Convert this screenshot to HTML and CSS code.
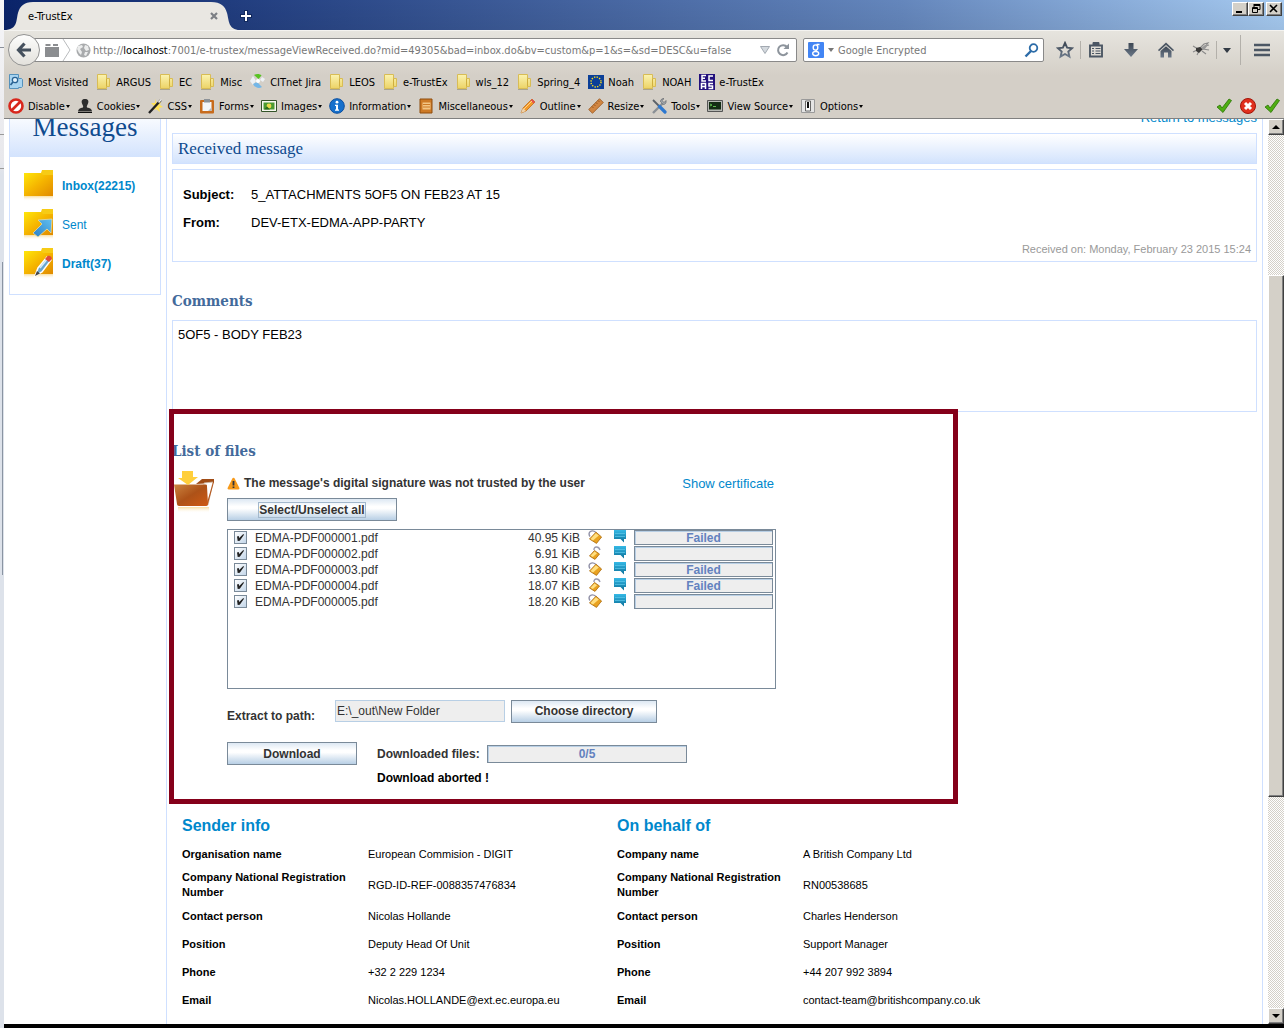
FILE: index.html
```html
<!DOCTYPE html>
<html lang="en">
<head>
<meta charset="utf-8">
<title>e-TrustEx</title>
<link rel="stylesheet" href="styles.css">
</head>
<body>
<svg class="defs" aria-hidden="true">
  <defs>
    <linearGradient id="gold" x1="0" y1="0" x2="1" y2="1"><stop offset="0" stop-color="#ffe60a"/><stop offset=".5" stop-color="#f5b400"/><stop offset="1" stop-color="#e08a00"/></linearGradient>
    <linearGradient id="pale" x1="0" y1="0" x2="0" y2="1"><stop offset="0" stop-color="#fbf3b0"/><stop offset="1" stop-color="#ecd366"/></linearGradient>
    <linearGradient id="brown" x1="0" y1="0" x2="1" y2="1"><stop offset="0" stop-color="#cc8440"/><stop offset=".5" stop-color="#ad5218"/><stop offset="1" stop-color="#cf5a14"/></linearGradient>
    <linearGradient id="sky" x1="0" y1="1" x2="1" y2="0"><stop offset="0" stop-color="#2a7fc6"/><stop offset="1" stop-color="#62c0f0"/></linearGradient>
    <linearGradient id="teal" x1="0" y1="0" x2="0" y2="1"><stop offset="0" stop-color="#35b9e6"/><stop offset="1" stop-color="#0b6f98"/></linearGradient>
    <linearGradient id="fade" x1="0" y1="0" x2="0" y2="1"><stop offset="0" stop-color="#f5c860" stop-opacity=".6"/><stop offset="1" stop-color="#fff" stop-opacity="0"/></linearGradient>
    <linearGradient id="slate" x1="0" y1="0" x2="0" y2="1"><stop offset="0" stop-color="#3d4754"/><stop offset="1" stop-color="#6b7888"/></linearGradient>
  </defs>
  <symbol id="folder" viewBox="0 0 16 16"><path d="M1.500.500h9v4h3v8h-3v2h-9z" fill="url(#pale)" stroke="#d8bc55"/><path d="M10.500 4.500v8" stroke="#cfae3e"/><path d="M1 15.500h10" stroke="#aaa58f"/></symbol>
  <symbol id="visited" viewBox="0 0 16 16"><path d="M1.500.500h9v4h3l1 1v7l-1 1h-3v1h-9z" fill="#a8d4f0" stroke="#5591bb"/><circle cx="7" cy="6" r="2.700" fill="#e5f4fd" stroke="#2a6394" stroke-width="1.300"/><path d="M5 8 2.500 11" stroke="#2a6394" stroke-width="1.800"/></symbol>
  <symbol id="jira" viewBox="0 0 16 16"><path d="M4 1c3-1.500 6-1 7.500.500L8.500 5z" fill="#58c322"/><path d="M3 2 0 7l3 4 3-4zM12 3l3 2-2 3-3-2z" fill="#edf1f5"/><path d="M3 10l4-2 5 5c-3 2-7 1-9-3z" fill="#74b7e8"/><circle cx="8" cy="7" r="2" fill="#fff"/></symbol>
  <symbol id="eu" viewBox="0 0 16 16"><path d="M0 1h16v14H0z" fill="#0b3f98"/><circle cx="8" cy="8" r="5" fill="none" stroke="#ffe01a" stroke-width="1.400" stroke-dasharray="1.300 1.320"/></symbol>
  <symbol id="ecas" viewBox="0 0 16 16"><path d="M0 0h16v16H0z" fill="#23107c"/><path d="M7 1.500H3V7h4M3 4.200h3M14 2h-4v4.500h4M2.500 15V9.500h4V15M2.500 12.500h4M14 9.500h-4v2.500h3.500v2.500H9.500" fill="none" stroke="#fff" stroke-width="1.500"/></symbol>
  <symbol id="disable" viewBox="0 0 16 16"><circle cx="8" cy="8" r="6.500" fill="#fff" stroke="#d8271c" stroke-width="2.600"/><path d="M3.500 12.500l9-9" stroke="#d8271c" stroke-width="2.600"/></symbol>
  <symbol id="cookies" viewBox="0 0 16 16"><path d="M8 1c3 0 4 2 3 4.500S9.500 8 10 9.500c3 .500 5 1.500 5 4H1c0-2.500 2-3.500 5-4C6.500 8 6 8 5 5.500S5 1 8 1z" fill="#2d2d2d"/><path d="M1 14.500h14" stroke="#111"/></symbol>
  <symbol id="css" viewBox="0 0 16 16"><path d="M8 1l1.500 4L14 3l-1 4 3 2-4 1 1 4-4-3-3 1 1-4-3-3 4 0z" fill="#ffe259"/><path d="M2 15 14 2" stroke="#222" stroke-width="2.400"/><path d="M11.500 4.500l2.700-3" stroke="#eee" stroke-width="1.800"/></symbol>
  <symbol id="forms" viewBox="0 0 16 16"><rect x="1" y="2" width="14" height="13.500" rx="1" fill="#c76b1c"/><path d="M3.500 4h9v9h-9z" fill="#f4f6f8"/><path d="M5 1h6v3.500H5z" fill="#8c9298"/><path d="M9 13l3.500-3.500V13z" fill="#b5bdc5"/></symbol>
  <symbol id="images" viewBox="0 0 16 16"><path d="M.500 2.500h15v11H.500z" fill="#f8f8f0" stroke="#34542a"/><path d="M2.500 4.500h11v7h-11z" fill="#4b9a31"/><circle cx="8" cy="8" r="2.400" fill="#e8d94b"/><path d="M3 11.500l3-3 3 3" fill="#2b6b1b"/></symbol>
  <symbol id="info" viewBox="0 0 16 16"><circle cx="8" cy="8" r="7.300" fill="#1670cc" stroke="#0b4fa0"/><circle cx="8" cy="4.200" r="1.400" fill="#fff"/><path d="M6 6.800h3v4.700h1v1.300H6v-1.300h1V8H6z" fill="#fff"/></symbol>
  <symbol id="misc" viewBox="0 0 16 16"><path d="M2 1h12v14H2z" fill="#cd7a26" stroke="#8f4c0c"/><path d="M4.500 4.500h8v7h-8z" fill="#f3c583"/><path d="M5 6.500h7M5 9h7" stroke="#cd7a26"/></symbol>
  <symbol id="outline" viewBox="0 0 16 16"><path d="M1 15l2-5L12 1l3 3-9 9z" fill="#f39a28" stroke="#b76410" stroke-width=".700"/><path d="M1 15l2-5 3 3z" fill="#eed2ab"/><path d="M12 1l3 3-1.500 1.500-3-3z" fill="#e4514e"/><path d="M4 11l8-8" stroke="#ffd08a"/></symbol>
  <symbol id="resize" viewBox="0 0 16 16"><path d="M.700 11.500 11.500.700l3.800 3.800L4.500 15.300z" fill="#d18642" stroke="#99551c" stroke-width=".800"/><path d="M4 8.500l1.300 1.300M6 6.500l1.300 1.300M8 4.500l1.300 1.300M10 2.500l1.300 1.300" stroke="#7c410f" stroke-width=".800"/></symbol>
  <symbol id="tools" viewBox="0 0 16 16"><path d="M2 15 12.500 4.500" stroke="#8b9096" stroke-width="2.400"/><path d="M15 2.500 13 4.500l-2-2L13 .600C11 .300 9 2 9.700 4L12 6.300c2 .700 3.600-1.500 3-3.800z" fill="#a5abb0" stroke="#50565c" stroke-width=".600"/><path d="M2 2l6 6" stroke="#5b6167" stroke-width="1.800"/><path d="M8.500 8.500l5.500 5.500" stroke="#2d78d0" stroke-width="3.200" stroke-linecap="round"/></symbol>
  <symbol id="source" viewBox="0 0 16 16"><path d="M.500 2.500h15v11H.500z" fill="#b7b9b4" stroke="#555"/><path d="M2 4h12v7.500H2z" fill="#142c14"/><path d="M3 6l2 1-2 1M6 8.500h3" stroke="#5fbb4f" fill="none"/></symbol>
  <symbol id="options" viewBox="0 0 16 16"><path d="M1.500 1.500h13v13h-13z" fill="#e4e4e4" stroke="#9a9a9a"/><path d="M5.500 3h5v10h-5z" fill="#fafafa" stroke="#666"/><path d="M7 4h2v6H7z" fill="#111"/></symbol>
  <symbol id="tick" viewBox="0 0 16 16"><path d="M1 9l3-2 2 3 7-9 2.500 1.500L7 14.500z" fill="#4fae12" stroke="#2a7404" stroke-width=".800"/></symbol>
  <symbol id="stop" viewBox="0 0 16 16"><circle cx="8" cy="8" r="7.500" fill="#e0301e" stroke="#a31509"/><path d="M5 5l6 6M11 5l-6 6" stroke="#fff" stroke-width="3"/></symbol>
  <symbol id="inbox" viewBox="0 0 32 36"><path d="M19 2h11v6H17z" fill="#f7cb15"/><path d="M1 5h17l2 2h10v21H1z" fill="url(#gold)"/><path d="M1 28h29v5H1z" fill="url(#fade)"/></symbol>
  <symbol id="lock" viewBox="0 0 14 14"><path d="M2 6.500C-1 2 4-1 8 2.500" fill="none" stroke="#8f8fa5" stroke-width="1.400"/><path d="M8 2.200 13.600 7 8.500 13.400 1.500 9z" fill="#e9a220" stroke="#a9690c" stroke-width=".800"/><path d="M7.800 3.200l3 2.300L5 10.500 2.500 9z" fill="#ffdf80"/></symbol>
  <symbol id="unlock" viewBox="0 0 14 14"><path d="M6 4C5.500.500 10.500-.500 12 4" fill="none" stroke="#9a9aae" stroke-width="1.400"/><path d="M6.500 4.500 11.500 8 7 13.400 1.500 10z" fill="#e9a220" stroke="#a9690c" stroke-width=".800"/><path d="M6.500 5.500l2.500 1.700L4.800 11 2.500 9.800z" fill="#ffdf80"/></symbol>
  <symbol id="bubble" viewBox="0 0 14 14"><path d="M1 0h12v9h-2v3.500L7.500 9H1z" fill="url(#teal)"/><path d="M2 3.500h10M2 6.500h10" stroke="#5cc8ea" stroke-opacity=".7"/></symbol>
</svg>

<div class="desktop">
  <div class="behind"></div>
  <div class="window">
    <header class="titlebar">
      <div class="tab">
        <svg class="tab-shape" viewBox="0 0 236 30" preserveAspectRatio="none" aria-hidden="true"><path d="M0 30C14 30 12 20 14 13S20 2 29 2H207C217 2 221 6 223 13S224 30 236 30z" fill="#e9e7e2"/></svg>
        <span class="tab-title">e-TrustEx</span>
        <button class="tab-close" aria-label="Close tab"><svg width="8" height="8" viewBox="0 0 8 8"><path d="M1 1l6 6M7 1 1 7" stroke="#7c7f84" stroke-width="2.200"/></svg></button>
      </div>
      <button class="tab-new" aria-label="New tab"><svg width="12" height="12" viewBox="0 0 12 12"><path d="M6 0v12M0 6h12" stroke="#10285e" stroke-width="4"/><path d="M6 1v10M1 6h10" stroke="#fff" stroke-width="2"/></svg></button>
      <div class="window-buttons">
        <button class="bevel" aria-label="Minimise"><svg width="12" height="10" viewBox="0 0 12 10"><path d="M2 8h6" stroke="#000" stroke-width="2"/></svg></button>
        <button class="bevel" aria-label="Restore"><svg width="12" height="10" viewBox="0 0 12 10"><path d="M4 .500h6v5H8M4 1.500h6M4 0v3" fill="none" stroke="#000"/><path d="M2.500 3.500h5v5h-5zM2 4.500h6" fill="none" stroke="#000"/></svg></button>
        <button class="bevel last" aria-label="Close"><svg width="12" height="10" viewBox="0 0 12 10"><path d="M2 1l7 7M9 1 2 8" stroke="#000" stroke-width="1.600"/></svg></button>
      </div>
    </header>

    <div class="toolbars">
      <nav class="navbar">
        <button class="back" aria-label="Back"><svg width="16" height="16" viewBox="0 0 16 16"><path d="M8.500 1.500 2.500 8l6 6.500M3 8h12" fill="none" stroke="#45505d" stroke-width="3.200"/></svg></button>
        <div class="url">
          <svg class="blocks" width="16" height="14" viewBox="0 0 16 14"><path d="M1 4h14v10H1zM1.500 1h5v2h-5zM9 1h5v2H9z" fill="#8b8d90"/></svg>
          <svg width="10" height="22" viewBox="0 0 10 22"><path d="M1 0l7 11-7 11" fill="none" stroke="#b9bbbd"/></svg>
          <svg class="globe" width="15" height="15" viewBox="0 0 15 15"><circle cx="7.500" cy="7.500" r="7" fill="#a9abad"/><path d="M2 3l4-1 1 2-3 2 2 3-1 3-2-2-2-4zM9 2l3 1 1 4-3 1-2-3zM9 9l3 0-2 4-2-1z" fill="#eceded"/></svg>
          <div class="address"><span>http://</span><b>localhost</b><span>:7001/e-trustex/messageViewReceived.do?mid=49305&amp;bad=inbox.do&amp;bv=custom&amp;p=1&amp;s=&amp;sd=DESC&amp;u=false</span></div>
          <svg class="drop" width="10" height="8" viewBox="0 0 10 8"><path d="M.500.500h9L5 7.500z" fill="#d4d9de" stroke="#a2a9b1"/></svg>
          <button class="reload" aria-label="Reload"><svg width="14" height="14" viewBox="0 0 14 14"><path d="M11.500 9.500A5 5 0 1 1 11 4" fill="none" stroke="#8d949c" stroke-width="2"/><path d="M7.500 6h5.500V.500z" fill="#8d949c"/></svg></button>
        </div>
        <div class="search">
          <svg width="16" height="16" viewBox="0 0 16 16"><rect width="16" height="16" rx="1" fill="#4285f4"/><ellipse cx="7.500" cy="5.500" rx="2.300" ry="2.600" fill="none" stroke="#fff" stroke-width="1.400"/><ellipse cx="7.700" cy="11.600" rx="3" ry="2.100" fill="none" stroke="#fff" stroke-width="1.400"/><path d="M8.500 2.500h3M7.500 8l1.500 1.500" stroke="#fff" stroke-width="1.300"/></svg>
          <svg width="6" height="4" viewBox="0 0 6 4"><path d="M0 0h6L3 4z" fill="#777"/></svg>
          <input class="search-input" aria-label="Search" placeholder="Google Encrypted">
          <svg width="15" height="15" viewBox="0 0 15 15"><circle cx="9.500" cy="5" r="3.800" fill="none" stroke="#2c6ca8" stroke-width="1.800"/><path d="M7 8 1.500 13.500" stroke="#2c6ca8" stroke-width="2.400"/></svg>
        </div>
        <div class="nav-icons">
          <svg class="nav-icon" viewBox="0 0 18 18"><path d="M9 2l2.100 4.700 5 .500-3.800 3.400 1.100 5L9 13l-4.400 2.600 1.100-5L1.900 7.200l5-.500z" fill="none" stroke="url(#slate)" stroke-width="1.900"/></svg>
          <span class="divider"></span>
          <svg class="nav-icon" viewBox="0 0 18 18"><path d="M3 4.500h12v11H3z" fill="none" stroke="#4c5764" stroke-width="1.900"/><path d="M6 1.500h6V4H6zM5 7.500h2M8.500 7.500h5M5 10h2M8.500 10h5M5 12.500h2M8.500 12.500h5" stroke="#4c5764" fill="#4c5764"/></svg>
          <svg class="nav-icon spaced" viewBox="0 0 18 18"><path d="M6.500 2h5v6H16l-7 8-7-8h4.500z" fill="url(#slate)"/></svg>
          <svg class="nav-icon spaced" viewBox="0 0 18 18"><path d="M9 1.500 17 9l-1 1.200L9 4 2 10.200 1 9z" fill="#4c5764"/><path d="M3.500 10 9 5.200l5.500 4.800v6.500H11v-5H7v5H3.500z" fill="url(#slate)"/></svg>
          <svg class="nav-icon spaced" viewBox="0 0 18 18"><path d="M1 5l5 3M8 7l4-4 4-1-4 5M11 8l6 1M10 10l4 3M7 10l-2 4M5 9l-4 2M13 5l4-1" fill="none" stroke="#8a8a8a" stroke-width="1.100"/><path d="M4 7l4-1 3 2-4 4-3-2z" fill="#3a3a3a"/><path d="M9 7l4-3 3 0-4 5z" fill="#999"/></svg>
          <span class="divider"></span>
          <svg width="8" height="5" viewBox="0 0 8 5"><path d="M0 0h8L4 5z" fill="#333b45"/></svg>
          <span class="divider tall"></span>
          <svg class="nav-icon menu" viewBox="0 0 18 18"><path d="M1 4h16M1 9h16M1 14h16" stroke="#4c5764" stroke-width="2.600"/></svg>
        </div>
      </nav>
      <nav class="bookmarks">
        <a href="#"><svg><use href="#visited"/></svg>Most Visited</a>
        <a href="#"><svg><use href="#folder"/></svg>ARGUS</a>
        <a href="#"><svg><use href="#folder"/></svg>EC</a>
        <a href="#"><svg><use href="#folder"/></svg>Misc</a>
        <a href="#"><svg><use href="#jira"/></svg>CITnet Jira</a>
        <a href="#"><svg><use href="#folder"/></svg>LEOS</a>
        <a href="#"><svg><use href="#folder"/></svg>e-TrustEx</a>
        <a href="#"><svg><use href="#folder"/></svg>wls_12</a>
        <a href="#"><svg><use href="#folder"/></svg>Spring_4</a>
        <a href="#"><svg><use href="#eu"/></svg>Noah</a>
        <a href="#"><svg><use href="#folder"/></svg>NOAH</a>
        <a href="#"><svg><use href="#ecas"/></svg>e-TrustEx</a>
      </nav>
      <div class="devbar">
        <button><svg><use href="#disable"/></svg>Disable</button>
        <button><svg><use href="#cookies"/></svg>Cookies</button>
        <button><svg><use href="#css"/></svg>CSS</button>
        <button><svg><use href="#forms"/></svg>Forms</button>
        <button><svg><use href="#images"/></svg>Images</button>
        <button><svg><use href="#info"/></svg>Information</button>
        <button><svg><use href="#misc"/></svg>Miscellaneous</button>
        <button><svg><use href="#outline"/></svg>Outline</button>
        <button><svg><use href="#resize"/></svg>Resize</button>
        <button><svg><use href="#tools"/></svg>Tools</button>
        <button><svg><use href="#source"/></svg>View Source</button>
        <button><svg><use href="#options"/></svg>Options</button>
        <div class="status"><svg><use href="#tick"/></svg><svg><use href="#stop"/></svg><svg><use href="#tick"/></svg></div>
      </div>
    </div>

    <div class="viewport">
      <div class="page">
        <aside class="sidebar">
          <h1>Messages</h1>
          <ul>
            <li><a href="#"><svg viewBox="0 0 32 36"><use href="#inbox"/></svg><b>Inbox(22215)</b></a></li>
            <li><a href="#"><svg viewBox="0 0 32 36"><use href="#inbox"/><path d="M10 26 19 17l-4-4 14-1-1 14-4-4-9 8z" fill="url(#sky)" stroke="#e9d9a0" stroke-width=".800"/></svg>Sent</a></li>
            <li><a href="#"><svg viewBox="0 0 32 36"><use href="#inbox"/><path d="M12 30l3-8L24 11l4 3-9 12z" fill="#6aa6cf" stroke="#fff" stroke-width="1.500"/><path d="M17 22l8-10" stroke="#d9ecf8" stroke-width="1.500"/><path d="M22 13l2.500-3c2-1 5 1 4 3.500L26 16z" fill="#df4a3a"/><path d="M12 30l2-5 3 2.500z" fill="#444"/></svg><b>Draft(37)</b></a></li>
          </ul>
        </aside>
        <main class="main">
          <a class="return" href="#">Return to messages</a>
          <h2 class="bar">Received message</h2>
          <section class="box summary">
            <dl>
              <dt>Subject:</dt><dd>5_ATTACHMENTS 5OF5 ON FEB23 AT 15</dd>
              <dt>From:</dt><dd>DEV-ETX-EDMA-APP-PARTY</dd>
            </dl>
            <p class="received">Received on: Monday, February 23 2015 15:24</p>
          </section>
          <h3>Comments</h3>
          <section class="box comments">5OF5 - BODY FEB23</section>

          <section class="files">
            <h3>List of files</h3>
            <div class="files-body">
              <svg class="files-icon" viewBox="0 0 42 44"><path d="M22 13l6-5h12v4z" fill="#a04c16"/><path d="M30 12l9-1-5 23h-5z" fill="#fff" stroke="#cbb9a4" stroke-width=".800"/><path d="M39 11h1l-6 22-2 2z" fill="#b55a20"/><path d="M0 13.500h32c1 0 1 1 1 2L34 33c0 1-1 2-2 2H5c-1 0-2-1-2-2z" fill="url(#brown)"/><path d="M8 0h11v6h5l-10 8L4 7h4z" fill="#ffcf3c"/><path d="M4 36h31v6H4z" fill="url(#fade)"/></svg>
              <div class="applet">
                <div class="notice">
                  <svg width="13" height="13" viewBox="0 0 13 13"><path d="M6.500.800c.700 0 1 .400 1.300 1l4.500 9c.400.900 0 1.700-1 1.700H1.700c-1 0-1.400-.800-1-1.700l4.500-9c.300-.600.600-1 1.300-1z" fill="#f79a1b"/><path d="M6.500 4v4.500M6.500 9.500v1.500" stroke="#30343c" stroke-width="1.800"/></svg>
                  <b>The message's digital signature was not trusted by the user</b>
                  <a href="#">Show certificate</a>
                </div>
                <button class="metal wide"><span>Select/Unselect all</span></button>
                <div class="list">
                  <table>
                    <colgroup><col class="c-check"><col><col class="c-size"><col class="c-lock"><col class="c-note"><col class="c-bar"></colgroup>
                    <tbody>
                      <tr><td><input id="f1" type="checkbox" checked></td><td><label for="f1">EDMA-PDF000001.pdf</label></td><td class="size">40.95 KiB</td><td><svg><use href="#lock"/></svg></td><td><svg><use href="#bubble"/></svg></td><td><div class="progress">Failed</div></td></tr>
                      <tr><td><input id="f2" type="checkbox" checked></td><td><label for="f2">EDMA-PDF000002.pdf</label></td><td class="size">6.91 KiB</td><td><svg><use href="#unlock"/></svg></td><td><svg><use href="#bubble"/></svg></td><td><div class="progress"></div></td></tr>
                      <tr><td><input id="f3" type="checkbox" checked></td><td><label for="f3">EDMA-PDF000003.pdf</label></td><td class="size">13.80 KiB</td><td><svg><use href="#lock"/></svg></td><td><svg><use href="#bubble"/></svg></td><td><div class="progress">Failed</div></td></tr>
                      <tr><td><input id="f4" type="checkbox" checked></td><td><label for="f4">EDMA-PDF000004.pdf</label></td><td class="size">18.07 KiB</td><td><svg><use href="#unlock"/></svg></td><td><svg><use href="#bubble"/></svg></td><td><div class="progress">Failed</div></td></tr>
                      <tr><td><input id="f5" type="checkbox" checked></td><td><label for="f5">EDMA-PDF000005.pdf</label></td><td class="size">18.20 KiB</td><td><svg><use href="#lock"/></svg></td><td><svg><use href="#bubble"/></svg></td><td><div class="progress"></div></td></tr>
                    </tbody>
                  </table>
                </div>
                <div class="row">
                  <label class="path-label" for="path">Extract to path:</label>
                  <input id="path" class="path" value="E:\_out\New Folder" readonly>
                  <button class="metal choose">Choose directory</button>
                </div>
                <div class="row download">
                  <button class="metal get">Download</button>
                  <span class="count-label">Downloaded files:</span>
                  <div class="progress total">0/5</div>
                </div>
                <p class="aborted">Download aborted !</p>
              </div>
            </div>
            <div class="highlight"></div>
          </section>

          <div class="parties">
            <section>
              <h4>Sender info</h4>
              <table>
                <tr><th scope="row">Organisation name</th><td>European Commision - DIGIT</td></tr>
                <tr><th scope="row">Company National Registration Number</th><td>RGD-ID-REF-0088357476834</td></tr>
                <tr><th scope="row">Contact person</th><td>Nicolas Hollande</td></tr>
                <tr><th scope="row">Position</th><td>Deputy Head Of Unit</td></tr>
                <tr><th scope="row">Phone</th><td>+32 2 229 1234</td></tr>
                <tr><th scope="row">Email</th><td>Nicolas.HOLLANDE@ext.ec.europa.eu</td></tr>
              </table>
            </section>
            <section>
              <h4>On behalf of</h4>
              <table>
                <tr><th scope="row">Company name</th><td>A British Company Ltd</td></tr>
                <tr><th scope="row">Company National Registration Number</th><td>RN00538685</td></tr>
                <tr><th scope="row">Contact person</th><td>Charles Henderson</td></tr>
                <tr><th scope="row">Position</th><td>Support Manager</td></tr>
                <tr><th scope="row">Phone</th><td>+44 207 992 3894</td></tr>
                <tr><th scope="row">Email</th><td>contact-team@britishcompany.co.uk</td></tr>
              </table>
            </section>
          </div>
        </main>
      </div>
      <div class="scrollbar">
        <button class="bevel" aria-label="Scroll up"><svg width="8" height="4" viewBox="0 0 8 4"><path d="M4 0l4 4H0z"/></svg></button>
        <div class="track"><div class="thumb"></div></div>
        <button class="bevel" aria-label="Scroll down"><svg width="8" height="4" viewBox="0 0 8 4"><path d="M0 0h8L4 4z"/></svg></button>
      </div>
    </div>
  </div>
</div>
</body>
</html>
```
FILE: styles.css
```css
* { box-sizing: border-box; }
body { margin: 0; font-family: "Liberation Sans", Arial, sans-serif; font-size: 12px; color: #000; }
h1, h2, h3, h4, p, ul, dl, dd { margin: 0; padding: 0; }
button, input { font: inherit; margin: 0; }
button { padding: 0; border: 0; background: none; }
a { color: #08c; text-decoration: none; }
svg { display: block; flex: none; }
.defs { position: absolute; width: 0; height: 0; }

.desktop { display: flex; height: 100vh; overflow: hidden; }
.behind {
  flex: 0 0 4px;
  background:
    linear-gradient(#8a8f98, #8a8f98) 0 47px / 4px 1px no-repeat,
    linear-gradient(#9a9a9a, #9a9a9a) 0 134px / 4px 1px no-repeat,
    linear-gradient(#9a9a9a, #9a9a9a) 0 168px / 4px 1px no-repeat,
    linear-gradient(90deg, transparent 2px, #8a94a2 2px, #8a94a2 3px, transparent 3px) 0 262px / 4px 313px no-repeat,
    linear-gradient(#f6f6f8, #e8e8ec 160px, #dde2ea 175px, #dde2ea);
}
.window { flex: 1; min-width: 0; display: flex; flex-direction: column; border-bottom: 4px solid #000; background: #fff; }

/* Title bar */
.titlebar {
  display: flex; flex: 0 0 30px; align-items: center;
  background: linear-gradient(rgba(255,255,255,0), rgba(0,0,0,.06)), linear-gradient(90deg, #0a246a, #6486bc 70%, #a6caf0);
  font-family: "DejaVu Sans Condensed", "DejaVu Sans", sans-serif; font-size: 11px;
}
.tab { position: relative; display: flex; align-items: center; width: 236px; height: 30px; padding: 2px 20px 0 24px; }
.tab-shape { position: absolute; inset: 0; width: 100%; height: 100%; }
.tab-title { position: relative; flex: 1; }
.tab-close { position: relative; margin-right: 2px; }
.tab-new { width: 14px; margin: 2px auto 0 0; }
.window-buttons { display: flex; align-self: flex-start; padding: 2px 2px 0 0; }
.bevel {
  display: flex; align-items: center; justify-content: center; width: 16px; height: 14px;
  background: #d4d0c8; border: 1px solid; border-color: #fff #404040 #404040 #fff; box-shadow: inset -1px -1px #808080;
}
.bevel.last { margin-left: 2px; }

/* Toolbars */
.toolbars {
  flex: none; padding-top: 4px; border-top: 1px solid #f4f3f0; border-bottom: 1px solid #808080;
  background: linear-gradient(#e6e4de, #d4cfc7 45px);
  font-family: "DejaVu Sans Condensed", "DejaVu Sans", sans-serif; font-size: 11px;
}
.navbar { display: flex; align-items: center; height: 30px; padding-left: 4px; }
.back {
  position: relative; z-index: 1; display: flex; align-items: center; justify-content: center; flex: none;
  width: 32px; height: 32px; margin-right: -16px; border: 1px solid #939393; border-radius: 50%;
  background: linear-gradient(#fdfdfc, #e3e1dc);
}
.url, .search { display: flex; align-items: center; height: 24px; background: #fff; border: 1px solid #898989; border-radius: 2px; }
.url { flex: 1; min-width: 0; padding: 0 6px 0 19px; }
.blocks { margin-right: 2px; }
.globe { margin: 0 2px 0 4px; }
.address { flex: 1; min-width: 0; overflow: hidden; white-space: nowrap; color: #777; }
.address b { font-weight: 400; color: #000; }
.drop { margin-right: 6px; }
.search { flex: 0 0 241px; gap: 4px; margin-left: 6px; padding: 0 4px; }
.search-input { flex: 1; min-width: 0; border: 0; outline: 0; padding: 0; background: none; }
.search-input::placeholder { color: #777; opacity: 1; }
.nav-icons { display: flex; flex: 0 0 240px; align-items: center; gap: 6px; padding-left: 12px; }
.nav-icon { width: 18px; height: 18px; }
.nav-icon.spaced { margin-left: 11px; }
.nav-icon.menu { margin-left: 6px; }
.divider { width: 1px; height: 18px; background: #b3b0aa; }
.divider.tall { height: 30px; margin-left: 3px; }
.bookmarks, .devbar { display: flex; align-items: center; height: 24px; padding-left: 4px; white-space: nowrap; }
.bookmarks { gap: 8px; margin-top: 5px; }
.bookmarks a { display: flex; align-items: center; gap: 4px; color: #000; }
.bookmarks svg, .devbar svg { width: 16px; height: 16px; }
.devbar { gap: 7px; }
.devbar button { display: flex; align-items: center; gap: 4px; }
.devbar button::after { content: ""; margin-left: -3px; border: 2px solid transparent; border-top: 3px solid #000; border-bottom: 0; }
.status { display: flex; gap: 8px; margin-left: auto; padding-right: 4px; }

/* Page */
.viewport { flex: 1; min-height: 0; display: flex; overflow: hidden; }
.page { flex: 1; min-width: 0; display: flex; gap: 5px; margin-top: -9px; padding: 0 5px; }
.sidebar { flex: 0 0 152px; align-self: flex-start; border: 1px solid #cfe0ff; }
.sidebar h1 {
  padding-bottom: 14px; text-align: center; color: #0f4b8f; background: linear-gradient(#fff, #d3e3fd);
  font: 400 27px/32px "Liberation Serif", "Times New Roman", serif;
}
.sidebar ul { list-style: none; padding: 9px 0 11px 13px; }
.sidebar a { display: flex; align-items: center; gap: 7px; height: 39px; }
.sidebar svg { width: 32px; height: 36px; }
.main { flex: 1; min-width: 0; padding: 0 5px; border: solid #cfe0ff; border-width: 0 1px; }
.return { display: block; text-align: right; font-size: 13px; line-height: 16px; }
.bar {
  margin: 7px 0 5px; padding: 0 5px; border: 1px solid #cfe0ff; color: #0f4b8f;
  background: linear-gradient(#fff, #d3e3fd); font: 400 17px/29px "Liberation Serif", "Times New Roman", serif;
}
.box { border: 1px solid #cfe0ff; }
.summary { padding: 11px 5px 4px 10px; font-size: 13px; }
.summary dl { display: grid; grid-template-columns: 68px 1fr; line-height: 28px; }
.summary dt { font-weight: 700; }
.received { margin-top: 4px; text-align: right; font-size: 11px; line-height: 16px; color: #999; }
h3 { margin-top: 29px; color: #436a9b; font: 700 15px/20px "DejaVu Serif Condensed", "DejaVu Serif", serif; }
.comments { min-height: 92px; margin-top: 9px; padding: 6px 5px; font-size: 13px; line-height: 16px; }

/* Attached files */
.files { position: relative; }
.files-body { display: flex; gap: 11px; margin-top: 10px; padding-left: 2px; }
.files-icon { width: 42px; height: 44px; }
.applet { width: 549px; color: #333; }
.notice { display: flex; align-items: center; gap: 4px; height: 24px; margin-bottom: 3px; }
.notice a { margin-left: auto; padding-right: 2px; font-size: 13px; }
.metal {
  height: 23px; border: 1px solid #7a8a99; color: #333; font-weight: 700;
  background: linear-gradient(#dde8f3, #fff 35%, #fff 45%, #b8cfe5);
}
.wide { display: block; width: 170px; }
.wide span { outline: 1px solid #a3b8cc; }
.list { min-height: 160px; margin: 8px 0 10px; border: 1px solid #7a8a99; }
.list table { width: 100%; table-layout: fixed; border-collapse: collapse; }
.list tr { height: 16px; }
.list td { height: 16px; padding: 0; line-height: 16px; vertical-align: top; }
.list svg { width: 14px; height: 14px; margin-left: 8px; }
.list input {
  display: block; appearance: none; position: relative; width: 13px; height: 13px; margin: 1px 0 0 6px;
  border: 1px solid #7a8a99; background: linear-gradient(135deg, #fff, #c3d6e9);
}
.list input:checked::after {
  content: ""; position: absolute; inset: 2px; background: #222;
  clip-path: polygon(0 35%, 25% 30%, 32% 58%, 90% 0, 100% 10%, 40% 95%, 10% 100%);
}
.c-check { width: 27px; }
.c-size { width: 90px; }
.c-lock { width: 25px; }
.c-note { width: 29px; }
.c-bar { width: 141px; }
.size { text-align: right; }
.progress {
  height: 15px; margin-right: 2px; border: 1px solid #7a8a99; box-shadow: inset 1px 1px #b8cfe5;
  background: #eee; color: #6382bf; font-weight: 700; line-height: 14px; text-align: center;
}
.row { display: flex; align-items: center; font-weight: 700; }
.path-label { width: 108px; padding-top: 10px; }
.path { width: 170px; height: 22px; margin-right: 6px; padding: 0 1px; border: 1px solid #b8cfe5; background: #eee; color: #333; font-weight: 400; }
.choose { width: 146px; }
.download { margin-top: 19px; }
.get { width: 130px; margin-right: 20px; }
.count-label { width: 110px; }
.progress.total { width: 200px; height: 18px; line-height: 17px; margin: 0; }
.aborted { margin: 5px 0 0 150px; color: #000; font-weight: 700; line-height: 16px; }
.highlight { position: absolute; top: -32px; left: -3px; width: 789px; height: 395px; border: 5px solid #85001a; pointer-events: none; }

/* Sender and represented party */
.parties { display: flex; gap: 5px; margin-top: 30px; padding-left: 10px; }
.parties section { flex: 0 0 430px; }
h4 { margin-bottom: 4px; color: #08c; font-size: 16px; line-height: 20px; }
.parties table { border-collapse: collapse; font-size: 11px; line-height: 15px; }
.parties tr { height: 28px; }
.parties th { width: 186px; padding: 2px 12px 2px 0; text-align: left; }
.parties td { padding: 2px 0; }

/* Scroll bar */
.scrollbar { flex: 0 0 16px; display: flex; flex-direction: column; }
.scrollbar .bevel { height: 16px; flex: none; }
.track {
  flex: 1; display: grid; grid-template-rows: 140fr 522fr 211fr;
  background: repeating-conic-gradient(#d4d0c8 0 25%, #fff 0 50%) 0 0 / 2px 2px;
}
.thumb { grid-row: 2; background: #d4d0c8; border: 1px solid; border-color: #fff #404040 #404040 #fff; box-shadow: inset -1px -1px #808080; }
```
